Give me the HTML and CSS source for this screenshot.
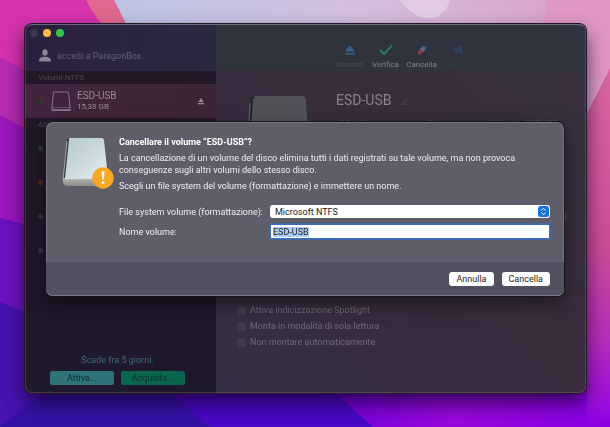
FILE: index.html
```
<!DOCTYPE html>
<html lang="it">
<head>
  <meta charset="UTF-8">
  <meta name="viewport" content="width=device-width, initial-scale=1.0">
  <title>NTFS for Mac</title>
  <link rel="stylesheet" href="styles.css">
</head>
<body>
  <!-- Desktop wallpaper -->
  <svg class="wallpaper" viewBox="0 0 610 427" preserveAspectRatio="none" aria-hidden="true">
    <defs>
      <linearGradient id="top" x1="0" y1="0" x2="1" y2="0">
        <stop offset="0" stop-color="#bcc4e6"/>
        <stop offset="0.5" stop-color="#d3bfdd"/>
        <stop offset="1" stop-color="#dc9bc6"/>
      </linearGradient>
      <linearGradient id="right" x1="0" y1="0" x2="0" y2="1">
        <stop offset="0" stop-color="#d967a0"/>
        <stop offset="0.5" stop-color="#cc4c98"/>
        <stop offset="0.75" stop-color="#b52fb8"/>
        <stop offset="0.92" stop-color="#a010dc"/>
        <stop offset="1" stop-color="#8c00e6"/>
      </linearGradient>
      <linearGradient id="bottom" x1="0" y1="0" x2="1" y2="0">
        <stop offset="0" stop-color="#7000e0"/>
        <stop offset="0.5" stop-color="#9a08dc"/>
        <stop offset="1" stop-color="#8c00e6"/>
      </linearGradient>
    </defs>
    <rect width="610" height="427" fill="#d633ad"/>
    <path d="M0 57 L24 70 L60 90 V427 H0Z" fill="#b62cb0"/>
    <path d="M0 115 L24 128 L60 150 V427 H0Z" fill="#9a18bd"/>
    <path d="M0 218 L24 224 L60 240 V427 H0Z" fill="#6c11c0"/>
    <path d="M0 302 L24 312 L60 330 H180 V427 H0Z" fill="#4612b0"/>
    <path d="M60 380 H168 L210 427 H0Z" fill="#3512a6"/>
    <path d="M86 0 H114 L130 34 H112 Q96 20 86 0Z" fill="#e0688e"/>
    <path d="M114 0 H610 V300 H300 L126 24Z" fill="url(#top)"/>
    <path d="M400 0 Q416 22 436 18 Q448 10 450 0Z" fill="#e6d5e6" opacity="0.7"/>
    <path d="M548 0 H610 V80 L530 80Z" fill="#e394bf" opacity="0.7"/>
    <path d="M610 68 L586 116 V427 H610Z" fill="url(#right)"/>
    <path d="M155 380 L210 427 H400 L320 380Z" fill="#4a08c8"/>
    <path d="M320 380 L373 427 H587 V380Z" fill="url(#bottom)"/>
  </svg>

  <main class="window">
    <aside class="sidebar">
      <header class="account">
        <div class="lights">
          <span class="light"></span>
          <span class="light yellow"></span>
          <span class="light green"></span>
        </div>
        <a href="#" class="login">
          <svg width="12" height="13" viewBox="0 0 12 13" aria-hidden="true">
            <ellipse cx="6" cy="3.5" rx="2.7" ry="3.3" fill="#8c8796"/>
            <path d="M0 12.5 C0 9 2.5 8.3 4.4 7.8 H7.6 C9.5 8.3 12 9 12 12.5Z" fill="#8c8796"/>
          </svg>
          accedi a ParagonBox
        </a>
      </header>

      <h2 class="section">Volumi NTFS</h2>
      <div class="volume">
        <span class="dot green-dot"></span>
        <svg width="20" height="21" viewBox="0 0 20 21" fill="none" stroke="#84798a" aria-hidden="true">
          <path d="M2.5 1 H17.5 L19 16 V19.5 H1 V16Z"/>
          <path d="M1 16.5 H19" opacity="0.5"/>
          <path d="M1 19 H19" stroke-width="1.6"/>
        </svg>
        <div class="volume-text">
          <strong>ESD-USB</strong>
          <span>15,38 GB</span>
        </div>
        <button class="eject" aria-label="Espelli ESD-USB">
          <svg width="6" height="7" viewBox="0 0 6 7" fill="#988c9b" aria-hidden="true">
            <path d="M3 0 L5.6 4 H0.4Z"/>
            <rect y="5" width="6" height="1.3"/>
          </svg>
        </button>
      </div>

      <h2 class="section">Altri volumi</h2>
      <ul class="others">
        <li><span class="dot green-dot"></span></li>
        <li><span class="dot orange-dot"></span></li>
        <li><span class="dot green-dot"></span></li>
        <li><span class="dot"></span></li>
      </ul>

      <footer class="trial">
        <p>Scade fra 5 giorni.</p>
        <div class="trial-buttons">
          <button class="activate">Attiva...</button>
          <button class="buy">Acquista...</button>
        </div>
      </footer>
    </aside>

    <section class="content">
      <nav class="toolbar">
        <button class="tool dim">
          <svg width="14" height="12" viewBox="0 0 14 12" fill="#365c87" aria-hidden="true">
            <path d="M7 1 L12 7.5 H2Z"/>
            <rect x="2" y="9" width="10" height="1.6"/>
          </svg>
          Smonta
        </button>
        <button class="tool">
          <svg width="14" height="12" viewBox="0 0 14 12" fill="none" stroke="#1e8a70" stroke-width="1.6" aria-hidden="true">
            <path d="M1 6 L5 10 L13 1.5"/>
          </svg>
          Verifica
        </button>
        <button class="tool">
          <svg width="14" height="12" viewBox="0 0 14 12" aria-hidden="true">
            <path d="M8.8 1 L12 4 L8.3 7.8 L5.1 4.8Z" fill="#3c5f85"/>
            <path d="M7.3 3.1 L9.9 5.9 L8 7.9 L5.2 5.1Z" fill="#686a7f"/>
            <path d="M5.2 5.1 L8 7.9 L5.4 10.7 Q4.7 11.2 4 10.6 L2.7 9.3 Q2.2 8.6 2.7 7.9Z" fill="#8a3a4c"/>
          </svg>
          Cancella
        </button>
        <button class="tool faint">
          <svg width="14" height="12" viewBox="0 0 14 12" fill="#2b435a" aria-hidden="true">
            <path d="M2 5 L11 1 V10 L6 8 L5 11 L4 7Z"/>
          </svg>
          Avvio
        </button>
      </nav>

      <div class="details">
        <svg class="drive" width="66" height="86" viewBox="0 0 66 86" aria-hidden="true">
          <path d="M5 2 H60 L65 74 Q65 84 58 84 H7 Q0 84 0 75Z" fill="#25232a"/>
          <path d="M9 1 H57 Q59 1 60 4 L64 70 H3 L7 4Z" fill="#515258"/>
          <path d="M4 8 L1 74" stroke="#6c6670"/>
        </svg>
        <div class="info">
          <h1>ESD-USB
            <svg width="9" height="9" viewBox="0 0 9 9" fill="none" stroke="#453c4b" aria-hidden="true">
              <path d="M1 8 L2 5.5 L6.5 1 L8 2.5 L3.5 7Z M1 8.5 H8"/>
            </svg>
          </h1>
          <div class="facts">
            <span>Montato</span>
            <span>Sì</span>
            <span>/Volumes/ESD-USB</span>
          </div>
        </div>
      </div>

      <div class="usage"></div>

      <div class="options">
        <label><input type="checkbox"> Attiva indicizzazione Spotlight</label>
        <label><input type="checkbox"> Monta in modalità di sola lettura</label>
        <label><input type="checkbox"> Non montare automaticamente</label>
      </div>
    </section>

    <!-- Erase sheet -->
    <form class="sheet" role="dialog" aria-labelledby="sheet-title">
      <div class="sheet-body">
        <svg width="52" height="56" viewBox="0 0 52 56" aria-hidden="true">
          <defs>
            <linearGradient id="cover" x1="0" y1="0" x2="1" y2="1">
              <stop offset="0" stop-color="#b9c9d1"/>
              <stop offset="0.5" stop-color="#c9d8df"/>
              <stop offset="1" stop-color="#e6f0f4"/>
            </linearGradient>
            <linearGradient id="base" x1="0" y1="0" x2="0" y2="1">
              <stop offset="0" stop-color="#b4b7b2"/>
              <stop offset="1" stop-color="#8a8d8b"/>
            </linearGradient>
          </defs>
          <path d="M5 3 L41 3 L46 44 Q46 50 42 50 H5 Q0 50 1 44Z" fill="#3b3b40"/>
          <path d="M5 5 L1 44" stroke="#a2a4a6" fill="none"/>
          <path d="M1 42 H46 Q47 50 43 50 H5 Q0 50 1 42Z" fill="url(#base)"/>
          <path d="M8 2 H40 Q41 2 42 4 L46 42 H3 L7 4 Q7 2 8 2Z" fill="url(#cover)"/>
          <path d="M3 42.5 H45" stroke="#dcdfdd"/>
          <circle cx="41" cy="42" r="10.7" fill="#f8a91f"/>
          <path d="M39.5 35.5 H42.5 L41.9 43.6 H40.1Z" fill="#fff"/>
          <circle cx="41" cy="46.4" r="1.5" fill="#fff"/>
        </svg>
        <div class="message">
          <h2 id="sheet-title">Cancellare il volume “ESD-USB”?</h2>
          <p>La cancellazione di un volume del disco elimina tutti i dati registrati su tale volume, ma non provoca conseguenze sugli altri volumi dello stesso disco.</p>
          <p>Scegli un file system del volume (formattazione) e immettere un nome.</p>
          <div class="fields">
            <label for="fs">File system volume (formattazione):</label>
            <div class="select">
              <select id="fs">
                <option>Microsoft NTFS</option>
              </select>
              <svg width="11" height="11" viewBox="0 0 11 11" aria-hidden="true">
                <rect width="11" height="11" rx="2.5" fill="#1673e6"/>
                <path d="M3.5 4.4 L5.5 2.3 L7.5 4.4 M3.5 6.6 L5.5 8.7 L7.5 6.6" fill="none" stroke="#fff"/>
              </svg>
            </div>
            <label for="name">Nome volume:</label>
            <input id="name" type="text" value="ESD-USB" autofocus>
          </div>
        </div>
      </div>
      <footer class="sheet-actions">
        <button type="button">Annulla</button>
        <button type="submit">Cancella</button>
      </footer>
    </form>
  </main>
  <script src="script.js"></script>
</body>
</html>
```
FILE: styles.css
```
* {
  box-sizing: border-box;
}

body {
  margin: 0;
  min-height: 100vh;
  padding: 24px 24px 34px 25px;
  display: flex;
  font-family: Roboto, "Liberation Sans", sans-serif;
  font-size: 9px;
  line-height: 12px;
  color: #77707f;
}

h1, h2, p, ul {
  margin: 0;
  padding: 0;
  font-size: inherit;
  font-weight: normal;
}

button, input, select {
  font: inherit;
  color: inherit;
  margin: 0;
  padding: 0;
  border: 0;
  background: none;
}

svg {
  display: block;
  flex: none;
}

.wallpaper {
  position: fixed;
  inset: 0;
  width: 100%;
  height: 100%;
  z-index: -1;
}

.window {
  position: relative;
  flex: 1;
  display: grid;
  grid-template-columns: 191px 1fr;
  border-radius: 7px;
  background: #382d3c;
  box-shadow: 0 0 0 1px #201824, 0 10px 20px rgba(20, 0, 40, 0.75);
}

.window::after {
  content: '';
  position: absolute;
  inset: 0;
  border: 1px solid rgba(150, 135, 155, 0.3);
  border-top-color: rgba(150, 150, 165, 0.6);
  border-radius: 7px;
  pointer-events: none;
}

/* Sidebar */
.sidebar {
  display: flex;
  flex-direction: column;
  background: linear-gradient(#231826, #201729 60%, #1f192c);
  border-radius: 7px 0 0 7px;
}

.account {
  height: 47px;
  padding: 5px;
  background: linear-gradient(to right, #2b203e, #2a2940);
  border-radius: 7px 0 0 0;
}

.lights {
  display: flex;
  gap: 5px;
}

.light {
  width: 8px;
  height: 8px;
  border-radius: 50%;
  background: #3c354b;
}

.yellow { background: #fdbc40; }
.green { background: #34c84a; }

.login {
  display: flex;
  align-items: center;
  gap: 6px;
  margin: 12px 0 0 9px;
  color: #655e75;
  text-decoration: none;
}

.section {
  height: 13px;
  padding-left: 13px;
  font-size: 8px;
  line-height: 14px;
  color: #4c4350;
}

.volume {
  display: flex;
  align-items: center;
  height: 34px;
  padding: 0 12px 0 13px;
  background: linear-gradient(to right, #42253d, #3c2437);
}

.dot {
  display: block;
  width: 5px;
  height: 5px;
  border-radius: 50%;
  background: #38303f;
}

.green-dot { background: #2a3c30; }
.orange-dot { background: #4b3028; }

.volume svg {
  margin-left: 8px;
}

.volume-text {
  flex: 1;
  margin-left: 6px;
  font-size: 8px;
  line-height: 11px;
  color: #988c99;
}

.volume-text strong,
.volume-text span {
  display: block;
  font-weight: normal;
}

.volume-text strong {
  font-size: 10px;
}

.others {
  flex: 1;
  list-style: none;
  padding: 0 13px;
}

.others li {
  display: flex;
  align-items: center;
  height: 34px;
}

.trial {
  padding: 0 31px 8px 25px;
  text-align: center;
  color: #3c6d7a;
}

.trial-buttons {
  display: grid;
  grid-template-columns: 1fr 1fr;
  gap: 7px;
  margin-top: 5px;
}

.trial-buttons button {
  height: 14px;
  border-radius: 2px;
  color: #102c31;
}

.trial-buttons .activate { background: #2f7478; }
.trial-buttons .buy { background: #0b6650; }

/* Content */
.content {
  display: flex;
  flex-direction: column;
  overflow: hidden;
  background: linear-gradient(to top right, #352f43, #382b3d 40%, #38303c);
  border-radius: 0 7px 7px 0;
}

.toolbar {
  display: flex;
  justify-content: center;
  height: 47px;
  padding: 20px 0 0 5px;
  background: #2f333d;
}

.tool {
  display: flex;
  flex-direction: column;
  align-items: center;
  gap: 3px;
  width: 36px;
  height: 26px;
  font-size: 8px;
  line-height: 11px;
  color: #82848d;
}

.tool.dim { color: #4b505a; }
.tool.faint { color: #353c46; }

.details {
  display: flex;
  gap: 24px;
  padding: 24px 28px 0 30px;
}

.info {
  flex: 1;
}

.info h1 {
  display: flex;
  align-items: center;
  gap: 10px;
  height: 10px;
  font-size: 14px;
  color: #8a808f;
}

.facts {
  display: flex;
  justify-content: space-between;
  margin-top: 12px;
  padding-left: 6px;
  font-size: 8px;
  color: #57505c;
}

.usage {
  height: 8px;
  margin: 32px 20px 0;
  background: #5a5360;
}

.options {
  display: flex;
  flex-direction: column;
  gap: 4px;
  margin-top: auto;
  padding: 0 21px 45px;
  color: #716877;
}

.options label {
  display: flex;
  align-items: center;
  gap: 4px;
}

.options input {
  appearance: none;
  width: 9px;
  height: 9px;
  border-radius: 2px;
  background: #443b49;
}

/* Erase sheet */
.sheet {
  position: absolute;
  top: 98px;
  left: 21px;
  right: 22px;
  z-index: 1;
  background: #5f5d69;
  border-radius: 7px;
  color: #eeedf0;
  box-shadow: inset 0 0 0 1px rgba(160, 158, 170, 0.4), 0 0 0 1px #19141e, 0 8px 20px rgba(0, 0, 0, 0.45);
}

.sheet-body {
  display: flex;
  gap: 5px;
  padding: 14px 14px 23px 16px;
}

.message {
  flex: 1;
}

.message h2 {
  font-weight: bold;
  color: #fff;
}

.message p {
  margin-top: 4px;
}

.fields {
  display: grid;
  grid-template-columns: 151px 1fr;
  row-gap: 6px;
  align-items: center;
  margin-top: 13px;
  white-space: nowrap;
}

.select {
  position: relative;
}

.select select {
  display: block;
  appearance: none;
  width: 100%;
  height: 13px;
  padding: 0 5px;
  border-radius: 3px;
  background: #fff;
  color: #1c1c1e;
}

.select svg {
  position: absolute;
  top: 1px;
  right: 1px;
  pointer-events: none;
}

.fields input {
  width: 100%;
  height: 15px;
  padding: 0 2px;
  border: 1px solid #3a6cb5;
  outline: 1px solid #3f68a6;
  outline-offset: 0;
  background: #fff;
  color: #1c1c1e;
}

.fields input::selection {
  background: #accef7;
  color: #1c1c1e;
}

.sheet-actions {
  display: flex;
  justify-content: flex-end;
  gap: 8px;
  padding: 10px 14px;
  background: #525060;
  border-radius: 0 0 7px 7px;
  box-shadow: inset 0 -1px 0 #7b7985;
}

.sheet-actions button {
  height: 14px;
  padding: 0 7px;
  border-radius: 3px;
  background: #fff;
  color: #1c1c1e;
}
```
FILE: script.js
```
// the name is selected when the sheet opens
const nameInput = document.getElementById('name');
nameInput.focus();
nameInput.select();
```
